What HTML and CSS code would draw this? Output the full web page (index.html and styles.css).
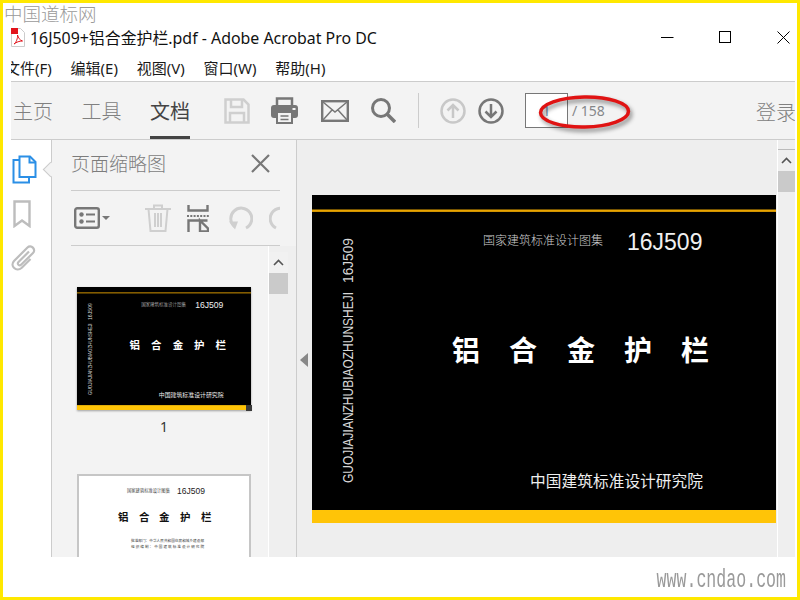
FILE: index.html
```html
<!DOCTYPE html>
<html lang="zh-CN">
<head>
<meta charset="utf-8">
<title>16J509+铝合金护栏.pdf - Adobe Acrobat Pro DC</title>
<link rel="stylesheet" href="styles.css">
</head>
<body>
<div class="window">
  <div class="mark-cn">中国道标网</div>

  <header class="titlebar">
    <svg class="pdf-icon" width="14" height="19" viewBox="0 0 14 19">
      <path d="M.5.5h9l4 4v14H.5z" fill="#fff" stroke="#ccc"/>
      <rect width="7" height="6" fill="#e2131b"/>
      <path d="M3 16c2-1 4-6 3.500-9 1 3 2 5 5 6-3 0-6 1-8.500 3z" fill="none" stroke="#e2131b"/>
    </svg>
    <div class="title-text">16J509+铝合金护栏.pdf - Adobe Acrobat Pro DC</div>
    <div class="win-btns">
      <svg width="13" height="13" viewBox="0 0 13 13"><path d="M0 6.500h12.500" stroke="#000"/></svg>
      <svg width="13" height="13" viewBox="0 0 13 13"><rect x=".5" y=".5" width="11" height="11" fill="none" stroke="#000"/></svg>
      <svg width="13" height="13" viewBox="0 0 13 13"><path d="M.5.500l12 12M12.500.500l-12 12" stroke="#000" fill="none"/></svg>
    </div>
  </header>

  <nav class="menubar">
    <span class="menu-item first">文件(F)</span>
    <span class="menu-item">编辑(E)</span>
    <span class="menu-item">视图(V)</span>
    <span class="menu-item">窗口(W)</span>
    <span class="menu-item">帮助(H)</span>
  </nav>

  <div class="toolbar">
    <div class="tabs">
      <span class="tab">主页</span>
      <span class="tab">工具</span>
      <span class="tab active">文档</span>
    </div>
    <svg class="t-save" width="26" height="26" viewBox="0 0 26 26" fill="none" stroke="#cfcfcf" stroke-width="2.500">
      <path d="M1.500 1.500h18l5 5v18h-23z"/><path d="M7 2v7h11V2M6 24v-9h14v9"/>
    </svg>
    <svg class="t-print" width="27" height="27" viewBox="0 0 27 27">
      <path d="M6 8V1.500h15V8" fill="none" stroke="#777" stroke-width="2.500"/>
      <rect y="8" width="27" height="13" rx="3" fill="#777"/>
      <rect x="6" y="15" width="15" height="11" fill="#f3f3f3" stroke="#777" stroke-width="2"/>
      <path d="M9.500 19h8M9.500 22.500h8" stroke="#777" stroke-width="1.500"/>
      <rect x="21.500" y="11" width="3" height="2" fill="#f3f3f3"/>
    </svg>
    <svg class="t-mail" width="28" height="22" viewBox="0 0 28 22" fill="none" stroke="#777">
      <rect x="1.200" y="1.200" width="25.600" height="19.600" stroke-width="2.400"/>
      <path d="M2 2l12 10L26 2M2 20l9-10M26 20l-9-10" stroke-width="1.500"/>
    </svg>
    <svg class="t-search" width="25" height="25" viewBox="0 0 25 25" fill="none" stroke="#777">
      <circle cx="10" cy="10" r="8.500" stroke-width="3"/><path d="M16 16l8 8" stroke-width="3.500"/>
    </svg>
    <span class="t-divider"></span>
    <svg class="t-up" width="26" height="26" viewBox="0 0 26 26" fill="none" stroke="#c8c8c8" stroke-width="2.500">
      <circle cx="13" cy="13" r="11.500"/><path d="M13 20V7M7.500 12.500L13 7l5.500 5.500"/>
    </svg>
    <svg class="t-down" width="26" height="26" viewBox="0 0 26 26" fill="none" stroke="#777" stroke-width="2.500">
      <circle cx="13" cy="13" r="11.500"/><path d="M13 6v13M7.500 13.500L13 19l5.500-5.500"/>
    </svg>
    <div class="page-box">1</div>
    <span class="page-total">/ 158</span>
    <span class="login">登录</span>
    <svg class="ring" width="110" height="50" viewBox="0 0 110 50" fill="none">
      <ellipse cx="49.500" cy="22" rx="44" ry="15" stroke="#e01313" stroke-width="3.500" transform="rotate(-1 50 22)"/>
    </svg>
  </div>

  <main class="workspace">
    <aside class="rail">
      <svg class="r-pages" width="25" height="29" viewBox="0 0 25 29" fill="none" stroke="#2b8fe6" stroke-width="2">
        <path d="M8 5H1.500v22.500h15.500V22"/>
        <path d="M7.500 1.500H18l5.500 5.500v15H7.500z" fill="#fff"/>
        <path d="M17.500 1.500v6h6"/>
      </svg>
      <svg class="r-mark" width="18" height="28" viewBox="0 0 18 28" fill="none" stroke="#bdbdbd" stroke-width="2.400">
        <path d="M1.500 1.500h15v24.500L9 20.500 1.500 26z"/>
      </svg>
      <svg class="r-clip" width="25" height="27" viewBox="0 0 25 27" fill="none" stroke="#bdbdbd" stroke-width="2.200">
        <path d="M18 7.500L7.500 18c-2 2 .8 4.500 2.800 2.500L22 9c3.500-3.500-2-9-5.500-5.500L3 17c-4.500 5 2.500 11.500 7.500 7l9-9"/>
      </svg>
      <span class="rail-notch"></span>
    </aside>

    <section class="panel">
      <div class="panel-head">
        <span class="panel-title">页面缩略图</span>
        <svg width="19" height="19" viewBox="0 0 19 19"><path d="M1 1l17 17M18 1L1 18" stroke="#777" stroke-width="2.200"/></svg>
      </div>
      <div class="panel-tools">
        <svg class="p-list" width="36" height="22" viewBox="0 0 36 22">
          <rect x="1.200" y="1.200" width="23.600" height="19.600" rx="2" fill="none" stroke="#777" stroke-width="2.400"/>
          <circle cx="7.500" cy="7.500" r="2.200" fill="#777"/><circle cx="7.500" cy="14.500" r="2.200" fill="#777"/>
          <path d="M12 7.500h9M12 14.500h9" stroke="#777" stroke-width="2"/>
          <path d="M28 9h8l-4 4z" fill="#777"/>
        </svg>
        <span class="p-divider"></span>
        <svg class="p-trash" width="26" height="28" viewBox="0 0 26 28" fill="none" stroke="#cfcfcf" stroke-width="2">
          <path d="M0 5h26M9 5V1.500h8V5M3.500 5l2 22h15l2-22M10 9v14M13 9v14M16 9v14"/>
        </svg>
        <svg class="p-crop" width="22" height="27" viewBox="0 0 22 27" fill="none" stroke="#777" stroke-width="2.400">
          <path d="M1.500 0v5.500h19V0"/><path d="M0 11h22" stroke-dasharray="2 1.300" stroke-width="2"/>
          <path d="M1.500 27V15.500h19M13 15.500l8 8v3h-8z"/>
        </svg>
        <svg class="p-undo" width="25" height="25" viewBox="0 0 25 25" fill="none" stroke="#cfcfcf" stroke-width="3">
          <path d="M7 21A10.500 10.500 0 1 1 18 22"/><path d="M1 15.500h9l-3 8z" fill="#cfcfcf" stroke="none"/>
        </svg>
        <svg class="p-redo" width="25" height="25" viewBox="0 0 25 25" fill="none" stroke="#cfcfcf" stroke-width="3">
          <path d="M18 21A10.500 10.500 0 1 0 7 22"/>
        </svg>
      </div>
      <div class="panel-body">
        <div class="thumbs">
          <figure class="thumb">
            <svg class="thumb-page" width="174" height="123" viewBox="0 0 464 328">
              <rect width="464" height="328" fill="#000"/>
              <rect y="14.500" width="464" height="2.400" fill="#e8a400"/>
              <rect y="315" width="464" height="13" fill="#ffc407"/>
              <text class="c-set" x="171" y="50">国家建筑标准设计图集</text>
              <text class="c-code" x="315" y="55">16J509</text>
              <text class="c-name" x="140" y="166">铝</text>
              <text class="c-name" x="197" y="166">合</text>
              <text class="c-name" x="255" y="166">金</text>
              <text class="c-name" x="312" y="166">护</text>
              <text class="c-name" x="369" y="166">栏</text>
              <text class="c-org" x="218" y="292" textLength="173">中国建筑标准设计研究院</text>
              <text class="c-side" transform="translate(41 288) rotate(-90)" textLength="191" lengthAdjust="spacingAndGlyphs">GUOJIAJIANZHUBIAOZHUNSHEJI</text>
              <text class="c-side" transform="translate(41 88) rotate(-90)" textLength="45" lengthAdjust="spacingAndGlyphs">16J509</text>
            </svg>
            <span class="thumb-handle"></span>
            <figcaption class="thumb-label">1</figcaption>
          </figure>
          <svg class="thumb-white" width="174" height="130" viewBox="0 0 174 130">
            <rect x="1" y="1" width="172" height="128" fill="#fff" stroke="#c6c6c6" stroke-width="2"/>
            <text class="w-set" x="50" y="18">国家建筑标准设计图集</text>
            <text class="w-code" x="100" y="19.500">16J509</text>
            <text class="w-name" x="41" y="47">铝</text>
            <text class="w-name" x="62" y="47">合</text>
            <text class="w-name" x="82" y="47">金</text>
            <text class="w-name" x="103" y="47">护</text>
            <text class="w-name" x="124" y="47">栏</text>
            <text class="w-sub" x="54" y="68" textLength="73">批准部门：中华人民共和国住房和城乡建设部</text>
            <text class="w-sub" x="54" y="74" textLength="73">组织编制：中国建筑标准设计研究院</text>
          </svg>
        </div>
        <div class="thumb-scroll">
          <div class="sb-up"><svg width="11" height="7" viewBox="0 0 11 7"><path d="M1 6l4.500-4.500L10 6" fill="none" stroke="#555" stroke-width="1.600"/></svg></div>
          <div class="sb-thumb"></div>
        </div>
      </div>
    </section>

    <section class="doc">
      <svg class="doc-page" width="464" height="328" viewBox="0 0 464 328">
        <rect width="464" height="328" fill="#000"/>
        <rect y="14.500" width="464" height="2.400" fill="#e8a400"/>
        <rect y="315" width="464" height="13" fill="#ffc407"/>
        <text class="c-set" x="171" y="50">国家建筑标准设计图集</text>
        <text class="c-code" x="315" y="55">16J509</text>
        <text class="c-name" x="140" y="166">铝</text>
        <text class="c-name" x="197" y="166">合</text>
        <text class="c-name" x="255" y="166">金</text>
        <text class="c-name" x="312" y="166">护</text>
        <text class="c-name" x="369" y="166">栏</text>
        <text class="c-org" x="218" y="292" textLength="173">中国建筑标准设计研究院</text>
        <text class="c-side" transform="translate(41 288) rotate(-90)" textLength="191" lengthAdjust="spacingAndGlyphs">GUOJIAJIANZHUBIAOZHUNSHEJI</text>
        <text class="c-side" transform="translate(41 88) rotate(-90)" textLength="45" lengthAdjust="spacingAndGlyphs">16J509</text>
      </svg>
      <span class="doc-toggle"></span>
    </section>

    <div class="doc-scroll">
      <div class="sb-up"><svg width="11" height="7" viewBox="0 0 11 7"><path d="M1 6l4.500-4.500L10 6" fill="none" stroke="#555" stroke-width="1.600"/></svg></div>
      <div class="sb-thumb"></div>
    </div>
  </main>

  <footer class="footer"><span class="mark-url">www.cndao.com</span></footer>
</div>
</body>
</html>
```

FILE: styles.css
```css
* { box-sizing: border-box; }
html, body { margin: 0; padding: 0; }
body { width: 800px; height: 600px; overflow: hidden; background: #fff; font-family: "Noto Sans", "Noto Sans CJK SC", sans-serif; }
svg { display: block; flex: none; }

.window { position: relative; width: 800px; height: 600px; border: 3px solid #ffe800; display: flex; flex-direction: column; overflow: hidden; background: #fff; }

.mark-cn { position: absolute; left: 1px; top: 0; font: 300 18.500px/20px "Noto Sans CJK SC", sans-serif; color: #9a9a9a; }

.titlebar { height: 53px; flex: none; display: flex; align-items: flex-start; padding: 25px 0 0 8px; }
.pdf-icon { margin-right: 5px; }
.title-text { font-size: 15.900px; line-height: 20px; color: #111; white-space: nowrap; flex: 1; }
.win-btns { display: flex; gap: 45px; padding: 3px 7px 0 0; }

.menubar { height: 25px; flex: none; margin-left: 8px; display: flex; gap: 18.800px; overflow: hidden; align-items: center; font-size: 15px; color: #1a1a1a; white-space: nowrap; padding-bottom: 3px; }
.menu-item.first { margin-left: -6px; }

.toolbar { position: relative; height: 59px; flex: none; margin: 0 2px 0 8px; background: #f3f3f3; border-top: 1px solid #ccc; border-bottom: 1px solid #ccc; display: flex; align-items: center; overflow: hidden; }
.tabs { display: flex; gap: 28.500px; height: 100%; padding-left: 2px; }
.tab { font-size: 20px; line-height: 59px; width: 40px; height: 57px; color: #808080; white-space: nowrap; font-weight: 300; }
.tab.active { color: #444; border-bottom: 3px solid #444; font-weight: 400; }
.t-save { margin-left: 34px; }
.t-print { margin-left: 21px; }
.t-mail { margin-left: 23px; }
.t-search { margin-left: 22px; }
.t-divider { width: 1px; height: 35px; background: #ccc; margin-left: 22px; }
.t-up { margin-left: 21px; }
.t-down { margin-left: 12px; }
.page-box { width: 43px; height: 35px; margin-left: 21px; background: #fff; border: 1px solid #777; font-size: 14px; line-height: 33px; text-align: center; color: #6d8fb0; }
.page-total { margin-left: 4px; font-size: 14px; color: #85878a; white-space: nowrap; }
.login { margin-left: auto; margin-right: -1px; padding-top: 2px; font-size: 20px; color: #808080; font-weight: 300; white-space: nowrap; }
.ring { position: absolute; left: 524px; top: 8px; filter: drop-shadow(2px 3px 2px rgba(0, 0, 0, .45)); }

.workspace { flex: 1; min-height: 0; display: flex; overflow: hidden; }

.rail { position: relative; width: 49px; flex: none; background: #fff; border-right: 1px solid #ccc; padding: 15px 0 0 9px; display: flex; flex-direction: column; }
.r-mark { margin: 16px 0 0 1px; }
.r-clip { margin: 16px 0 0 -1px; }
.rail-notch { position: absolute; right: -5px; top: 24px; width: 11px; height: 11px; background: #f3f3f3; border-left: 1px solid #ccc; border-bottom: 1px solid #ccc; transform: rotate(45deg); }

.panel { width: 245px; flex: none; background: #f3f3f3; border-right: 1px solid #ccc; display: flex; flex-direction: column; }
.panel-head { height: 51px; flex: none; margin: 0 16px 0 19px; border-bottom: 1px solid #ccc; display: flex; align-items: center; justify-content: space-between; padding: 0 10px 4px 0; }
.panel-title { font-size: 19px; font-weight: 300; color: #7c7c7c; white-space: nowrap; }
.panel-tools { height: 55px; flex: none; margin: 0 16px 0 19px; border-bottom: 1px solid #ccc; display: flex; align-items: center; overflow: hidden; padding: 0 0 0 3px; }
.p-divider { width: 1px; height: 35px; background: #ccc; margin-left: 14px; }
.p-trash { margin-left: 21px; }
.p-crop { margin-left: 16px; }
.p-undo { margin-left: 19px; }
.p-redo { margin-left: 16px; flex: none; }

.panel-body { flex: 1; min-height: 0; display: flex; overflow: hidden; }
.thumbs { width: 216px; flex: none; padding: 41px 0 0 25px; overflow: hidden; }
.thumb { position: relative; margin: 0; width: 174px; }
.thumb-handle { position: absolute; left: 169px; top: 118px; width: 6px; height: 6px; background: #3a3a3a; }
.thumb-label { font-size: 14px; line-height: 20px; text-align: center; color: #333; margin-top: 7px; }
.thumb-page { box-shadow: 0 1px 2px rgba(0, 0, 0, .35); }
.thumb-white { margin-top: 37px; }
.thumb-scroll { width: 28px; flex: none; border-left: 1px solid #fff; background: #efefef; padding-top: 6px; }
.thumb-scroll .sb-up { background: #f1f1f1; width: 19px; }
.thumb-scroll .sb-thumb { width: 19px; }

.sb-up { height: 21px; display: flex; align-items: center; justify-content: center; }
.sb-thumb { height: 21px; background: #cacaca; }

.doc { position: relative; flex: 1; min-width: 0; background: #eee; padding: 55px 0 0 15px; overflow: hidden; }
.doc-toggle { position: absolute; left: 3px; top: 213px; border-style: solid; border-width: 7px 8px 7px 0; border-color: transparent #888 transparent transparent; }

.doc-scroll { width: 18px; flex: none; margin-right: 2px; background: #efefef; border-left: 1px solid #fff; padding-top: 10px; }
.doc-scroll::before { content: ""; display: block; height: 1px; margin-top: -1px; background: #bbb; }

.footer { height: 40px; flex: none; display: flex; justify-content: flex-end; align-items: center; padding: 8px 11px 0 0; background: #fff; }
.mark-url { font: 16.600px/20px "Liberation Mono", monospace; color: #9a9a9a; transform: scaleY(1.55); }

.c-set { font: 300 12px "Noto Sans CJK SC", sans-serif; fill: #cfcfcf; }
.c-code { font: 23px "Liberation Sans", sans-serif; fill: #f0f0f0; }
.c-name { font: 700 28px "Noto Sans CJK SC", sans-serif; fill: #fff; }
.c-org { font: 400 15.700px "Noto Sans CJK SC", sans-serif; fill: #eee; }
.c-side { font: 14px "Liberation Sans", sans-serif; fill: #d8d8d8; }
.w-set { font: 400 4.300px "Noto Sans CJK SC", sans-serif; fill: #444; }
.w-code { font: 8.500px "Liberation Sans", sans-serif; fill: #222; }
.w-name { font: 700 10.500px "Noto Sans CJK SC", sans-serif; fill: #111; }
.w-sub { font: 400 3.600px "Noto Sans CJK SC", sans-serif; fill: #333; }
```
